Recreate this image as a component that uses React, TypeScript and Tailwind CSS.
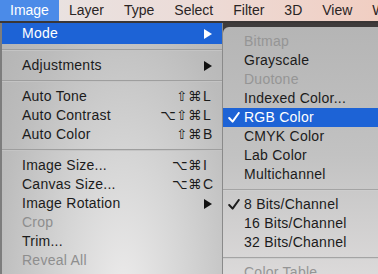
import React from 'react';

const menubar = ['Image', 'Layer', 'Type', 'Select', 'Filter', '3D', 'View', 'Window'];

type Row =
  | { kind: 'sep' }
  | {
      kind: 'item';
      label: string;
      mods?: string;
      keyChar?: string;
      arrow?: boolean;
      disabled?: boolean;
      active?: boolean;
      checked?: boolean;
    };

const mainRows: Row[] = [
  { kind: 'item', label: 'Mode', arrow: true, active: true },
  { kind: 'sep' },
  { kind: 'item', label: 'Adjustments', arrow: true },
  { kind: 'sep' },
  { kind: 'item', label: 'Auto Tone', mods: '⇧⌘', keyChar: 'L' },
  { kind: 'item', label: 'Auto Contrast', mods: '⌥⇧⌘', keyChar: 'L' },
  { kind: 'item', label: 'Auto Color', mods: '⇧⌘', keyChar: 'B' },
  { kind: 'sep' },
  { kind: 'item', label: 'Image Size...', mods: '⌥⌘', keyChar: 'I' },
  { kind: 'item', label: 'Canvas Size...', mods: '⌥⌘', keyChar: 'C' },
  { kind: 'item', label: 'Image Rotation', arrow: true },
  { kind: 'item', label: 'Crop', disabled: true },
  { kind: 'item', label: 'Trim...' },
  { kind: 'item', label: 'Reveal All', disabled: true },
];

const subRows: Row[] = [
  { kind: 'item', label: 'Bitmap', disabled: true },
  { kind: 'item', label: 'Grayscale' },
  { kind: 'item', label: 'Duotone', disabled: true },
  { kind: 'item', label: 'Indexed Color...' },
  { kind: 'item', label: 'RGB Color', checked: true, active: true },
  { kind: 'item', label: 'CMYK Color' },
  { kind: 'item', label: 'Lab Color' },
  { kind: 'item', label: 'Multichannel' },
  { kind: 'sep' },
  { kind: 'item', label: '8 Bits/Channel', checked: true },
  { kind: 'item', label: '16 Bits/Channel' },
  { kind: 'item', label: '32 Bits/Channel' },
  { kind: 'sep' },
  { kind: 'item', label: 'Color Table', disabled: true },
];

const Arrow = ({ white }: { white?: boolean }) => (
  <svg width="8" height="10" viewBox="0 0 8 10" className="absolute left-[202px]">
    <polygon points="0,0 8,5 0,10" fill={white ? '#ffffff' : '#111111'} />
  </svg>
);

const Check = ({ white }: { white?: boolean }) => (
  <svg width="12" height="11" viewBox="0 0 12 11" className="absolute left-[5px]">
    <polyline
      points="1.2,6 4.6,9.6 10.8,1"
      fill="none"
      stroke={white ? '#ffffff' : '#1c1c1c'}
      strokeWidth="2"
      strokeLinecap="round"
      strokeLinejoin="round"
    />
  </svg>
);

const MainItem = ({ row }: { row: Row }) => {
  if (row.kind === 'sep')
    return (
      <div className="flex h-[12px] flex-col justify-center">
        <div className="h-px bg-[#9e9e9e]" />
        <div className="h-px bg-[#c4c4c4]" />
      </div>
    );
  const color = row.active ? 'text-white' : row.disabled ? 'text-[#8e8e8e]' : 'text-[#1b1b1b]';
  return (
    <div
      className={`relative flex ${row.label === 'Mode' ? 'h-[21px]' : 'h-[19px]'} items-center ${
        row.active ? 'bg-[#1d63d6]' : ''
      } ${color}`}
    >
      <span className="pl-[20px] tracking-[0.25px]">{row.label}</span>
      {row.mods && (
        <span className="absolute right-[20px] font-['DejaVu_Sans'] text-[13.5px] tracking-[0.5px]">
          {row.mods}
        </span>
      )}
      {row.keyChar && <span className="absolute left-[201px]">{row.keyChar}</span>}
      {row.arrow && <Arrow white={row.active} />}
    </div>
  );
};

const SubItem = ({ row }: { row: Row }) => {
  if (row.kind === 'sep')
    return (
      <div className="flex h-[11px] flex-col justify-center">
        <div className="h-px bg-[#a4a4a4]" />
        <div className="h-px bg-[#cdcdcd]" />
      </div>
    );
  const color = row.active ? 'text-white' : row.disabled ? 'text-[#959595]' : 'text-[#1b1b1b]';
  return (
    <div className={`relative flex h-[19px] items-center ${row.active ? 'bg-[#1d63d6]' : ''} ${color}`}>
      {row.checked && <Check white={row.active} />}
      <span className="pl-[21px] tracking-[0.25px]">{row.label}</span>
    </div>
  );
};

export default function App() {
  return (
    <div className="flex h-[274px] w-[378px] flex-col overflow-hidden bg-[#3e3b3b] font-['Liberation_Sans',sans-serif] text-[14px]">
      {/* menu bar */}
      <div className="flex h-[21px] shrink-0 items-center bg-gradient-to-r from-[#e8e4e4] via-[#ecdcd8] to-[#f1cec2] text-[#2a2424]">
        {menubar.map((m, i) => (
          <div
            key={m}
            className={`flex h-full shrink-0 items-center px-[10px] ${i === 0 ? 'bg-[#4b8be8] text-white' : ''}`}
          >
            {m}
          </div>
        ))}
      </div>
      <div className="h-[2px] shrink-0 bg-[#3a3636]" />

      <div className="flex flex-1">
        {/* Image menu */}
        <div className="flex w-[223px] shrink-0 flex-col border-l-[2px] border-r border-l-[#7d7d7d] border-r-[#8a8a8a] bg-[radial-gradient(ellipse_at_55%_105%,#ecebeb_0%,#d6d6d6_35%,#bcbcbc_75%,#b3b3b3_100%)]">
          {mainRows.map((r, i) => (
            <MainItem key={i} row={r} />
          ))}
        </div>

        {/* Mode submenu */}
        <div className="flex flex-1 flex-col pt-[4px]">
          <div className="flex flex-1 flex-col rounded-tl-[6px] bg-gradient-to-b from-[#b5b5b5] via-[#c2c2c2] to-[#dddbdb] pt-[5px]">
            {subRows.map((r, i) => (
              <SubItem key={i} row={r} />
            ))}
          </div>
        </div>
      </div>
    </div>
  );
}
